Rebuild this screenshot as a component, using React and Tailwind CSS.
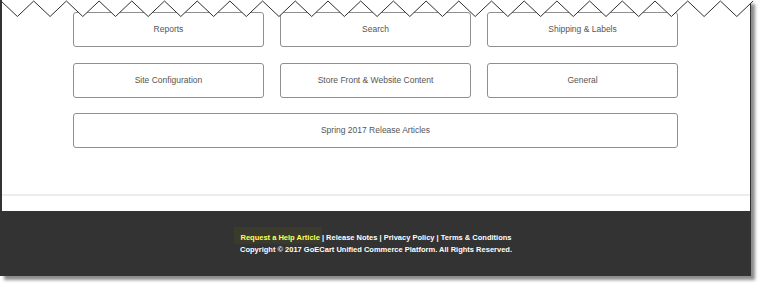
import React from "react";

const topics = [
  "Reports",
  "Search",
  "Shipping & Labels",
  "Site Configuration",
  "Store Front & Website Content",
  "General",
];

// torn paper edge along the top
const tearPoints = (() => {
  const pts = [];
  for (let k = 0; k <= 23; k++) {
    const x = -1 + 32.7 * k;
    pts.push(`${x.toFixed(1)},1`);
    if (k < 23) pts.push(`${(x + 16.35).toFixed(1)},16.5`);
  }
  return pts.join(" ");
})();

const TornEdge = () => (
  <svg
    className="absolute top-0 left-0"
    width="752"
    height="20"
    viewBox="0 0 752 20"
  >
    <polygon points={`-2,-2 ${tearPoints} 752,-2`} fill="#ffffff" />
    <polyline
      points={tearPoints}
      fill="none"
      stroke="#2e2e2e"
      strokeWidth="1"
    />
  </svg>
);

const TopicButton = ({ label, wide }) => (
  <button
    className={
      "h-[35px] rounded-[3px] border border-[#8f8f8f] bg-white text-[#555] text-[8.5px] " +
      (wide ? "col-span-3" : "")
    }
  >
    {label}
  </button>
);

const App = () => {
  return (
    <div className="w-[761px] h-[285px] bg-white font-['Liberation_Sans',Arial,sans-serif]">
      <div className="relative w-[751px] h-[276px] flex flex-col bg-white border-l-2 border-r border-b border-[#333] shadow-[4px_4px_3px_rgba(0,0,0,0.45)]">
        <div className="grid grid-cols-3 gap-x-[16px] gap-y-[15.5px] pl-[71px] pr-[72px] pt-[12px]">
          {topics.map((t) => (
            <TopicButton key={t} label={t} />
          ))}
          <TopicButton label="Spring 2017 Release Articles" wide />
        </div>

        <div className="mt-auto border-t-2 border-[#ececec] h-[17px]" />

        <footer className="h-[64px] bg-[#333] pt-[21px] text-center text-white text-[7.5px] font-bold leading-[11.5px]">
          <p>
            <span className="bg-[#3b3b2d] text-[#ffff55] pl-[7px] -ml-[7px] pr-[2px] -mr-[2px] pt-[6px] pb-[2px]">
              Request a Help Article
            </span>{" "}
            | Release Notes | Privacy Policy | Terms &amp; Conditions
          </p>
          <p>Copyright © 2017 GoECart Unified Commerce Platform. All Rights Reserved.</p>
        </footer>

        <TornEdge />
      </div>
    </div>
  );
};

export default App;
